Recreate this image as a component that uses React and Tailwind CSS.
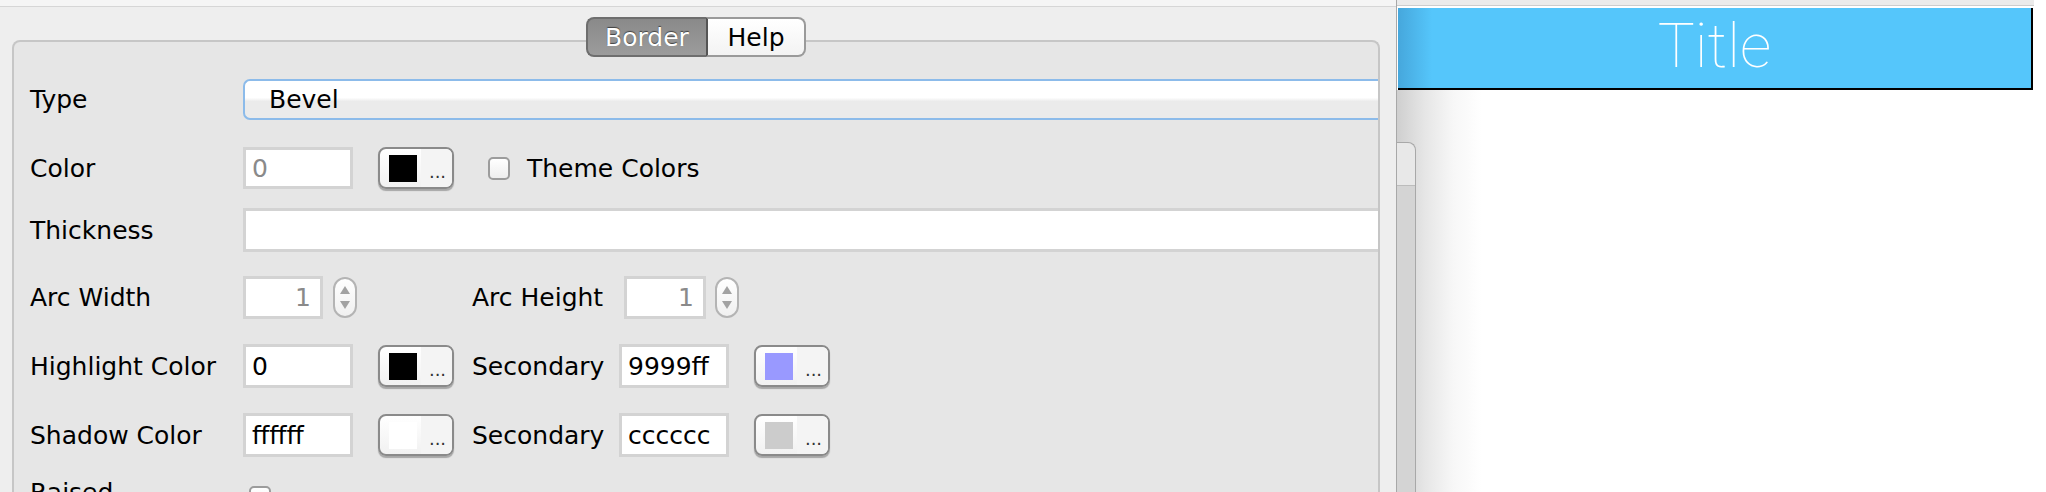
import React from "react";

const LBL = "text-[25px] leading-none text-black";

function Field({ w, text, gray, right, grow }) {
  return (
    <div
      className={`${grow ? "flex-1 border-r-0" : ""} h-full box-border border-[3px] border-[#d3d3d3] bg-white flex items-center ${right ? "justify-end pr-[9px]" : "pl-[6px]"} text-[25px] leading-none ${gray ? "text-[#8a8a8a]" : "text-black"}`}
      style={w ? { width: w } : undefined}
    >
      {text}
    </div>
  );
}

function ColorButton({ swatch, ml = "ml-[25px]" }) {
  return (
    <div className={`${ml} w-[76px] h-[42px] box-border rounded-[8px] border-2 border-[#8a8a8a] bg-[linear-gradient(#ffffff,#f1f1f1)] shadow-[0_2px_1px_rgba(0,0,0,0.28)] flex items-center pl-[9px] overflow-hidden`}>
      <div className={`w-[28px] h-[27px] ${swatch}`} />
      <div className="flex-1 self-stretch flex items-center justify-center pl-[2px] text-[18px] leading-none text-[#333] bg-[#f4f4f4] ml-[4px]">
        <span className="mt-[8px]">...</span>
      </div>
    </div>
  );
}

function Spinner({ ml }) {
  return (
    <div className={`${ml} w-[24px] h-[41px] box-border rounded-full border-2 border-[#b4b4b4] bg-[linear-gradient(#ffffff,#f0f0f0)] flex flex-col items-center justify-between py-[6px]`}>
      <svg width="12" height="10" viewBox="0 0 12 10">
        <polygon points="6,1 11,9 1,9" fill="#a2a2a2" />
      </svg>
      <svg width="12" height="10" viewBox="0 0 12 10">
        <polygon points="1,1 11,1 6,9" fill="#a2a2a2" />
      </svg>
    </div>
  );
}

function Checkbox({ ml }) {
  return (
    <div className={`${ml} w-[22px] h-[23px] shrink-0 box-border rounded-[5px] border-2 border-[#9c9c9c] bg-[linear-gradient(#ffffff,#eeeeee)]`} />
  );
}

function Label({ children, w = "w-[213px]" }) {
  return <div className={`${w} shrink-0 ${LBL}`}>{children}</div>;
}

export default function App() {
  return (
    <div className="w-[2046px] h-[492px] overflow-hidden flex bg-white font-['DejaVu_Sans',sans-serif]">
      {/* Left window */}
      <div className="w-[1397px] shrink-0 h-full flex flex-col border-r border-[#a8a8a8] box-border">
        <div className="h-[7px] shrink-0 bg-[#f5f5f5] border-b border-[#d6d6d6]" />
        <div className="flex-1 flex flex-col bg-[#eeeeee] pt-[33px] pl-[12px] pr-[16px]">
          <div className="relative flex-1 rounded-t-[8px] border-2 border-b-0 border-[#c6c6c6] bg-[#e6e6e6]">
            {/* tabs */}
            <div className="absolute top-[-25px] left-1/2 -translate-x-1/2 flex h-[40px] text-[25px] leading-none">
              <div className="w-[120px] h-full box-border rounded-l-[8px] border-2 border-r-0 border-[#6e6e6e] bg-[linear-gradient(#8a8a8a,#9c9c9c)] text-white flex items-center justify-center [text-shadow:0_-1px_1px_rgba(0,0,0,0.55)]">
                Border
              </div>
              <div className="w-[100px] h-full box-border rounded-r-[8px] border-2 border-l-2 border-[#9a9a9a] border-l-[#555555] bg-[linear-gradient(#ffffff,#f3f3f3)] text-black flex items-center justify-center">
                Help
              </div>
            </div>

            <div className="flex flex-col pl-[16px] pt-[37px]">
              {/* Type */}
              <div className="flex items-center h-[41px]">
                <Label>Type</Label>
                <div className="flex-1 h-full box-border rounded-l-[7px] border-2 border-r-0 border-[#8cbbea] bg-[linear-gradient(#ffffff_0%,#ffffff_45%,#ebebeb_55%,#ebebeb_100%)] flex items-center pl-[24px] text-[25px] leading-none text-black">
                  Bevel
                </div>
              </div>

              {/* Color */}
              <div className="flex items-center h-[42px] mt-[27px]">
                <Label>Color</Label>
                <Field w={110} text="0" gray />
                <ColorButton swatch="bg-black" />
                <Checkbox ml="ml-[34px]" />
                <div className={`ml-[17px] ${LBL}`}>Theme Colors</div>
              </div>

              {/* Thickness */}
              <div className="flex items-center h-[44px] mt-[19px]">
                <Label>Thickness</Label>
                <Field grow text="" />
              </div>

              {/* Arc */}
              <div className="flex items-center h-[43px] mt-[24px]">
                <Label>Arc Width</Label>
                <Field w={80} text="1" gray right />
                <Spinner ml="ml-[10px]" />
                <Label w="w-[152px] ml-[115px]">Arc Height</Label>
                <Field w={82} text="1" gray right />
                <Spinner ml="ml-[9px]" />
              </div>

              {/* Highlight */}
              <div className="flex items-center h-[44px] mt-[25px]">
                <Label>Highlight Color</Label>
                <Field w={110} text="0" />
                <ColorButton swatch="bg-black" />
                <Label w="w-[147px] ml-[18px]">Secondary</Label>
                <Field w={110} text="9999ff" />
                <ColorButton swatch="bg-[#9999ff]" />
              </div>

              {/* Shadow */}
              <div className="flex items-center h-[44px] mt-[25px]">
                <Label>Shadow Color</Label>
                <Field w={110} text="ffffff" />
                <ColorButton swatch="bg-white" />
                <Label w="w-[147px] ml-[18px]">Secondary</Label>
                <Field w={110} text="cccccc" />
                <ColorButton swatch="bg-[#cccccc]" />
              </div>

              {/* Raised */}
              <div className="flex items-start h-[40px] mt-[15px]">
                <div className="h-full flex items-center">
                  <Label>Raised</Label>
                </div>
                <div className="mt-[14px]">
                  <Checkbox ml="ml-[6px]" />
                </div>
              </div>
            </div>
          </div>
        </div>
      </div>

      {/* Right area */}
      <div className="flex-1 h-full flex flex-col bg-white">
        <div className="h-[6px] shrink-0 mr-[12px] bg-[#ebebeb] border-b border-[#cdcdcd]" />
        <div className="h-[2px] shrink-0" />
        <div className="h-[82px] shrink-0 ml-[1px] mr-[13px] box-border border-r-2 border-b-2 border-black bg-[linear-gradient(to_right,#46a7dc,#55c6fb_34px)] flex justify-center">
          <span className="mt-[7px] text-[62px] leading-none font-thin text-white font-['Roboto',sans-serif]">
            Title
          </span>
        </div>
        <div className="flex-1 flex bg-[linear-gradient(to_right,#cfcfcf_0px,#e6e6e6_28px,#f7f7f7_56px,#ffffff_85px)]">
          <div className="w-[19px] mt-[52px] shrink-0 flex flex-col box-border rounded-tr-[8px] border-t border-r border-[#a8a8a8] bg-[#d4d4d4]">
            <div className="h-[43px] bg-[#e8e8e8] border-b border-[#bcbcbc] rounded-tr-[8px]" />
          </div>
        </div>
      </div>
    </div>
  );
}
